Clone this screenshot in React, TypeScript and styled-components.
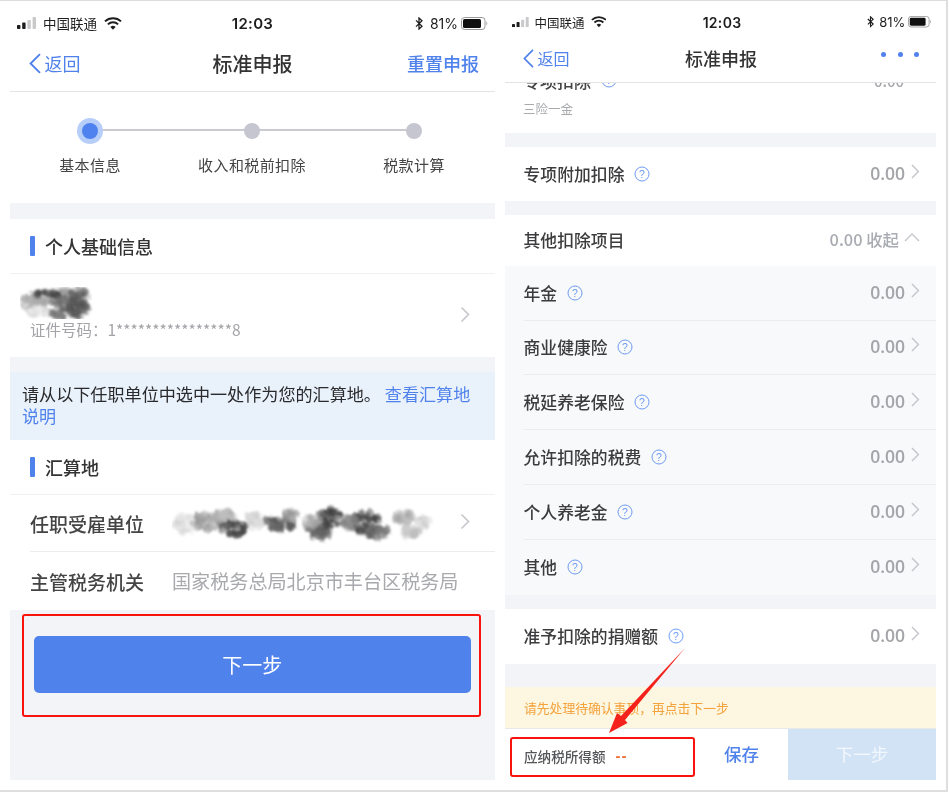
import React from "react";
import styled, { createGlobalStyle } from "styled-components";

const GlobalStyle = createGlobalStyle`
  html, body { margin: 0; padding: 0; background: #fff; }
  * { box-sizing: border-box; }
  body { font-family: "Noto Sans CJK SC", "Noto Sans", sans-serif; }
`;

const Page = styled.div`
  width: 948px;
  height: 792px;
  display: flex;
  gap: 10px;
  padding-left: 10px;
  background: #fff;
  border-top: 1px solid #dcdcdc;
  border-right: 2px solid #dedede;
  border-bottom: 2px solid #dedede;
  filter: blur(0.4px);
`;

const Phone = styled.div<{ $w: number }>`
  position: relative;
  width: ${({ $w }) => $w}px;
  height: 779px;
  display: flex;
  flex-direction: column;
`;

/* status bar */
const Status = styled.div<{ $small?: boolean }>`
  height: 44px;
  padding: ${({ $small }) => ($small ? "0 4px 2px 7px" : "0 7px 0 7px")};
  display: grid;
  grid-template-columns: 1fr auto 1fr;
  align-items: center;
  color: #1d1d1f;
  font-size: ${({ $small }) => ($small ? 12.5 : 13.5)}px;
`;
const StatusSide = styled.div<{ $right?: boolean; $gap: number }>`
  display: flex;
  align-items: center;
  gap: ${({ $gap }) => $gap}px;
  justify-content: ${({ $right }) => ($right ? "flex-end" : "flex-start")};
`;
const Clock = styled.span<{ $small?: boolean }>`
  font-family: "Inter", "Liberation Sans", sans-serif;
  font-weight: 600;
  font-size: ${({ $small }) => ($small ? 14 : 15)}px;
  letter-spacing: 0.3px;
`;
const Percent = styled.span<{ $small?: boolean }>`
  font-family: "Inter", "Liberation Sans", sans-serif;
  font-size: ${({ $small }) => ($small ? 13 : 14)}px;
`;

function StatusBar({ small }: { small?: boolean }) {
  const k = small ? 0.88 : 1;
  return (
    <Status $small={small}>
      <StatusSide $gap={small ? 5 : 6}>
        <svg width={20 * k} height={12 * k} viewBox="0 0 20 12">
          <rect x="0" y="8" width="3.4" height="4" rx="0.8" fill="#1d1d1f" />
          <rect x="5.2" y="5.6" width="3.4" height="6.4" rx="0.8" fill="#1d1d1f" />
          <rect x="10.4" y="3" width="3.4" height="9" rx="0.8" fill="#c9c9cc" />
          <rect x="15.6" y="0" width="3.4" height="12" rx="0.8" fill="#c9c9cc" />
        </svg>
        <span>中国联通</span>
        <svg width={18 * k} height={13 * k} viewBox="0 0 18 13" style={{ marginLeft: 1 }}>
          <path d="M1 4.4a11.6 11.6 0 0 1 16 0" fill="none" stroke="#1d1d1f" strokeWidth="2" />
          <path d="M3.9 7.4a7.4 7.4 0 0 1 10.2 0" fill="none" stroke="#1d1d1f" strokeWidth="2" />
          <path d="M6.4 10a3.7 3.7 0 0 1 5.2 0L9 12.8z" fill="#1d1d1f" />
        </svg>
      </StatusSide>
      <Clock $small={small}>12:03</Clock>
      <StatusSide $right $gap={small ? 5 : 7}>
        <svg width={8 * k} height={13 * k} viewBox="0 0 8 13">
          <path d="M1 3.4l6 5.8L4 12V1l3 2.8L1 9.6" fill="none" stroke="#1d1d1f" strokeWidth="1.3" />
        </svg>
        <Percent $small={small}>81%</Percent>
        <svg width={27 * k} height={13 * k} viewBox="0 0 27 13" style={{ marginLeft: small ? -2 : -4 }}>
          <rect x="0.5" y="0.5" width="23.5" height="12" rx="3" fill="none" stroke="#9a9a9a" />
          <rect x="2" y="2" width="18" height="9" rx="1.6" fill="#111" />
          <path d="M25.4 4.6c1 .3 1.2 3.5 0 3.8z" fill="#9a9a9a" />
        </svg>
      </StatusSide>
    </Status>
  );
}

/* nav bar */
const Nav = styled.div<{ $h: number; $l: number; $r: number; $b: number }>`
  height: ${({ $h }) => $h}px;
  padding: 0 ${({ $r }) => $r}px ${({ $b }) => $b}px ${({ $l }) => $l}px;
  display: grid;
  grid-template-columns: 1fr auto 1fr;
  align-items: center;
  border-bottom: 1px solid #e4e4e6;
  background: #fff;
`;
const Back = styled.div<{ $size: number; $shift?: number }>`
  display: flex;
  align-items: center;
  gap: 3px;
  margin-left: ${({ $shift }) => $shift ?? 0}px;
  color: #5082ec;
  font-size: ${({ $size }) => $size}px;
`;
const NavTitle = styled.div<{ $size: number }>`
  color: #333;
  font-size: ${({ $size }) => $size}px;
  font-weight: 500;
`;
const NavAction = styled.div`
  justify-self: end;
  color: #5082ec;
  font-size: 18px;
  font-weight: 500;
`;
const MoreDots = styled.div`
  justify-self: end;
  display: flex;
  gap: 11.5px;
  margin-bottom: 8px;
`;
const Dot = styled.span`
  width: 5px;
  height: 5px;
  border-radius: 50%;
  background: #5082ec;
`;

const BackArrow = ({ h }: { h: number }) => (
  <svg width={h * 0.6} height={h} viewBox="0 0 12 20">
    <path d="M10.5 1L1.5 10l9 9" fill="none" stroke="#5082ec" strokeWidth="1.8" />
  </svg>
);

/* stepper */
const Stepper = styled.div`
  height: 111px;
  width: 486px;
  margin-left: -1px;
  display: grid;
  grid-template-columns: repeat(3, 1fr);
`;
const Step = styled.div<{ $line?: "left" | "mid" | "right" }>`
  position: relative;
  display: flex;
  flex-direction: column;
  align-items: center;
  padding-top: 26px;
  &::before {
    content: "";
    position: absolute;
    top: 37px;
    height: 1.5px;
    background: #cacad2;
    left: ${({ $line }) => ($line === "left" ? "50%" : "0")};
    right: ${({ $line }) => ($line === "right" ? "50%" : "0")};
  }
`;
const Bullet = styled.div<{ $on?: boolean }>`
  position: relative;
  width: 26px;
  height: 26px;
  display: flex;
  align-items: center;
  justify-content: center;
  border-radius: 50%;
  background: ${({ $on }) => ($on ? "#b7cff8" : "transparent")};
  &::after {
    content: "";
    width: 16px;
    height: 16px;
    border-radius: 50%;
    background: ${({ $on }) => ($on ? "#4f82ee" : "#c6c6d0")};
  }
`;
const StepLabel = styled.div`
  margin-top: 10px;
  color: #444;
  font-size: 15px;
  line-height: 22px;
  letter-spacing: 0.4px;
`;

/* shared blocks */
const Gap = styled.div<{ $h: number }>`
  height: ${({ $h }) => $h}px;
  background: #f3f4f8;
`;
const SectionHead = styled.div`
  height: 55px;
  padding-left: 20px;
  display: flex;
  align-items: center;
  gap: 10px;
  color: #333;
  font-size: 18px;
  font-weight: 500;
  border-bottom: 1px solid #f0f0f2;
  &::before {
    content: "";
    width: 5px;
    height: 20px;
    border-radius: 1px;
    background: #5082ec;
  }
`;
const PersonRow = styled.div`
  height: 83px;
  padding: 13px 24px 0 10px;
  display: flex;
  justify-content: space-between;
`;
const PersonInfo = styled.div`
  display: flex;
  flex-direction: column;
`;
const PersonId = styled.div`
  margin: 0 0 0 10px;
  color: #a3a4a8;
  font-size: 15.5px;
  line-height: 20px;
`;
const Notice = styled.div`
  height: 68px;
  padding: 11px 20px 0 12px;
  background: #e9f1fb;
  color: #2a2a2c;
  font-size: 17.1px;
  line-height: 22px;
  a { color: #5082ec; }
`;
const FieldRow = styled.div<{ $h: number; $line?: boolean }>`
  height: ${({ $h }) => $h}px;
  margin-left: 20px;
  padding-right: 24px;
  display: flex;
  align-items: center;
  border-bottom: ${({ $line }) => ($line ? "1px solid #ececee" : "none")};
`;
const FieldName = styled.div`
  width: 142px;
  flex: none;
  color: #444;
  font-size: 19px;
  font-weight: 500;
`;
const FieldValue = styled.div`
  flex: 1;
  display: flex;
  color: #a8a9ad;
  font-size: 19.1px;
  white-space: nowrap;
`;
const Footer = styled.div`
  flex: 1;
  background: #f3f4f8;
  padding: 4px 14px 0 12px;
`;
const RedFrame = styled.div`
  height: 103px;
  padding: 20px 8.5px 0 10px;
  border: 2.5px solid #f8140c;
  border-radius: 3px;
`;
const PrimaryButton = styled.div`
  height: 57px;
  display: flex;
  align-items: center;
  justify-content: center;
  border-radius: 5px;
  background: #5082ec;
  color: #fff;
  font-size: 20px;
`;

/* right column rows */
const CutRow = styled.div`
  height: 50px;
  padding: 0 0 15px 18px;
  display: flex;
  flex-direction: column;
  justify-content: flex-end;
  overflow: hidden;
`;
const CutTop = styled.div`
  display: flex;
  align-items: center;
  height: 24px;
  margin-bottom: 8px;
  padding-right: 32px;
  color: #444;
  font-size: 17px;
  font-weight: 500;
`;
const CutValue = styled.span`
  margin-left: auto;
  color: #a4a5a8;
  font-size: 15px;
`;
const CutSub = styled.div`
  color: #a9aaae;
  font-size: 12.5px;
  line-height: 18px;
`;
const Row = styled.div<{ $h: number; $soft?: boolean }>`
  height: ${({ $h }) => $h}px;
  padding-left: 18.5px;
  background: ${({ $soft }) => ($soft ? "#f8f9fb" : "#fff")};
`;
const RowInner = styled.div<{ $line?: boolean }>`
  height: 100%;
  padding: 0 16px 1px 0;
  display: flex;
  align-items: center;
  border-bottom: ${({ $line }) => ($line ? "1px solid #ececef" : "none")};
`;
const RowName = styled.div`
  color: #3c3c3e;
  font-size: 16.8px;
  font-weight: 500;
  letter-spacing: 0.05px;
`;
const Amount = styled.div`
  margin: 0 0 2px auto;
  display: flex;
  align-items: center;
  gap: 6px;
  color: #a4a5a8;
  font-family: "Open Sans", "Liberation Sans", sans-serif;
  font-size: 17.5px;
  font-weight: 600;
`;
const Fold = styled.div`
  margin: 0 0 2px auto;
  display: flex;
  align-items: center;
  gap: 5px;
  color: #a9abb2;
  font-size: 16.4px;
  font-weight: 500;
`;
const Warn = styled.div`
  height: 41px;
  padding-left: 19px;
  display: flex;
  align-items: center;
  background: #fdf6e0;
  color: #f4a23c;
  font-size: 12.8px;
`;
const BottomBar = styled.div`
  flex: 1;
  display: flex;
  border-top: 1px solid #e9e9ec;
`;
const TotalBox = styled.div`
  width: 185px;
  height: 40px;
  margin: 8px 0 0 5px;
  padding: 0 0 3px 12px;
  display: flex;
  align-items: center;
  gap: 10px;
  border: 2.5px solid #f8140c;
  border-radius: 3px;
  color: #55565a;
  font-size: 13.6px;
  font-weight: 500;
`;
const Dash = styled.span`
  color: #ee6a2e;
  font-family: "Liberation Sans", sans-serif;
  font-size: 15px;
  font-weight: 700;
  letter-spacing: 1px;
`;
const Save = styled.div`
  flex: 1;
  padding-bottom: 3px;
  display: flex;
  align-items: center;
  justify-content: center;
  color: #5082ec;
  font-size: 17.5px;
  font-weight: 500;
`;
const NextOff = styled.div`
  width: 148px;
  padding-bottom: 3px;
  display: flex;
  align-items: center;
  justify-content: center;
  background: #d3e3f6;
  color: #f2f7fd;
  font-size: 17.5px;
`;
const ArrowMark = styled.svg`
  position: absolute;
  left: 95px;
  top: 640px;
`;

const Chevron = () => (
  <svg width="9" height="15" viewBox="0 0 9 15" style={{ marginBottom: 3 }}>
    <path d="M1 1l6.4 6.5L1 14" fill="none" stroke="#c6c7cc" strokeWidth="1.5" />
  </svg>
);

const Help = () => (
  <svg width="16" height="16" viewBox="0 0 16 16" style={{ marginLeft: 9.5, flex: "none" }}>
    <circle cx="8" cy="8" r="7" fill="none" stroke="#6f9bf3" strokeWidth="1" />
    <text x="8" y="11.6" textAnchor="middle" fontSize="10.5" fill="#6f9bf3" fontFamily="Liberation Sans, sans-serif">?</text>
  </svg>
);

/* the smeared-out private details: each cluster scatters small ink spots */
const Smudge = ({ width, height, blobs, seed }: { width: number; height: number; blobs: number[][]; seed: number }) => {
  const id = `ink${width}`;
  let s = seed;
  const rnd = () => {
    s = (s * 16807) % 2147483647;
    return (s % 1000) / 1000;
  };
  const spots: number[][] = [];
  blobs.forEach(([cx, cy, rx, ry, g]) => {
    const n = Math.round((rx * ry) / 3) + 10;
    for (let i = 0; i < n; i++) {
      const a = rnd() * Math.PI * 2;
      const d = Math.sqrt(rnd());
      spots.push([cx + Math.cos(a) * d * rx, cy + Math.sin(a) * d * ry, 1.6 + rnd() * 2.8, g + (rnd() - 0.5) * 40]);
    }
  });
  return (
    <svg width={width} height={height} viewBox={`0 0 ${width} ${height}`}>
      <filter id={id} x="-10%" y="-20%" width="120%" height="140%">
        <feTurbulence type="fractalNoise" baseFrequency="0.3" numOctaves="2" seed="4" />
        <feDisplacementMap in="SourceGraphic" scale="4" />
        <feGaussianBlur stdDeviation="0.8" />
      </filter>
      <g filter={`url(#${id})`}>
        {spots.map(([x, y, r, g], i) => (
          <circle key={i} cx={x} cy={y} r={r} fill={`rgb(${g},${g},${g})`} opacity="0.5" />
        ))}
      </g>
    </svg>
  );
};

const nameBlobs = [
  [14, 18, 12, 8, 190], [36, 10, 32, 7, 170], [48, 21, 20, 11, 110], [58, 19, 10, 9, 90],
  [28, 7, 12, 2, 70], [58, 6, 8, 3, 100], [20, 25, 12, 4, 225],
];
const unitBlobs = [
  [14, 22, 12, 9, 225], [36, 20, 15, 8, 165], [62, 25, 13, 8, 70], [52, 14, 10, 5, 180],
  [84, 18, 10, 8, 215], [108, 21, 15, 7, 90], [118, 13, 7, 5, 160], [146, 29, 13, 8, 100],
  [158, 16, 13, 9, 70], [140, 20, 9, 5, 170], [192, 20, 14, 11, 75], [206, 30, 11, 6, 110],
  [178, 22, 8, 7, 140], [232, 16, 10, 6, 175], [238, 29, 11, 5, 195], [250, 20, 7, 5, 210],
];

const steps: [string, "left" | "mid" | "right"][] = [
  ["基本信息", "left"],
  ["收入和税前扣除", "mid"],
  ["税款计算", "right"],
];

const otherItems: [string, number][] = [
  ["年金", 55],
  ["商业健康险", 54],
  ["税延养老保险", 55],
  ["允许扣除的税费", 55],
  ["个人养老金", 55],
  ["其他", 55],
];

export default function App() {
  return (
    <Page>
      <GlobalStyle />
      <Phone $w={485}>
        <StatusBar />
        <Nav $h={47} $l={16} $r={16} $b={10}>
          <Back $size={18} $shift={3}><BackArrow h={21} />返回</Back>
          <NavTitle $size={20}>标准申报</NavTitle>
          <NavAction>重置申报</NavAction>
        </Nav>
        <Stepper>
          {steps.map(([label, line], i) => (
            <Step key={label} $line={line}>
              <Bullet $on={i === 0} />
              <StepLabel>{label}</StepLabel>
            </Step>
          ))}
        </Stepper>
        <Gap $h={16} />
        <SectionHead>个人基础信息</SectionHead>
        <PersonRow>
          <PersonInfo>
            <Smudge width={80} height={32} blobs={nameBlobs} seed={71} />
            <PersonId>证件号码：1****************8</PersonId>
          </PersonInfo>
          <svg width="11" height="17" viewBox="0 0 11 17" style={{ marginTop: 19 }}>
            <path d="M1.5 1.5l7 7-7 7" fill="none" stroke="#c6c7cc" strokeWidth="1.6" />
          </svg>
        </PersonRow>
        <Gap $h={15} />
        <Notice>
          请从以下任职单位中选中一处作为您的汇算地。 <a>查看汇算地说明</a>
        </Notice>
        <SectionHead>汇算地</SectionHead>
        <FieldRow $h={57} $line>
          <FieldName>任职受雇单位</FieldName>
          <FieldValue>
            <Smudge width={262} height={42} blobs={unitBlobs} seed={137} />
          </FieldValue>
          <svg width="11" height="17" viewBox="0 0 11 17" style={{ marginBottom: 3 }}>
            <path d="M1.5 1.5l7 7-7 7" fill="none" stroke="#c6c7cc" strokeWidth="1.6" />
          </svg>
        </FieldRow>
        <FieldRow $h={58}>
          <FieldName>主管税务机关</FieldName>
          <FieldValue>国家税务总局北京市丰台区税务局</FieldValue>
        </FieldRow>
        <Footer>
          <RedFrame>
            <PrimaryButton>下一步</PrimaryButton>
          </RedFrame>
        </Footer>
      </Phone>

      <Phone $w={431}>
        <StatusBar small />
        <Nav $h={38} $l={18} $r={17} $b={12}>
          <Back $size={16}><BackArrow h={19} />返回</Back>
          <NavTitle $size={18}>标准申报</NavTitle>
          <MoreDots><Dot /><Dot /><Dot /></MoreDots>
        </Nav>
        <CutRow>
          <CutTop>
            <span>专项扣除</span>
            <Help />
            <CutValue>0.00</CutValue>
          </CutTop>
          <CutSub>三险一金</CutSub>
        </CutRow>
        <Gap $h={14} />
        <Row $h={54}>
          <RowInner>
            <RowName>专项附加扣除</RowName>
            <Help />
            <Amount>0.00<Chevron /></Amount>
          </RowInner>
        </Row>
        <Gap $h={14} />
        <Row $h={51}>
          <RowInner>
            <RowName>其他扣除项目</RowName>
            <Fold>
              0.00 收起
              <svg width="16" height="9" viewBox="0 0 16 9" style={{ marginBottom: 3 }}>
                <path d="M1 8l7-7 7 7" fill="none" stroke="#c6c7cc" strokeWidth="1.4" />
              </svg>
            </Fold>
          </RowInner>
        </Row>
        {otherItems.map(([name, h], i) => (
          <Row key={name} $h={h} $soft>
            <RowInner $line={i < otherItems.length - 1}>
              <RowName>{name}</RowName>
              <Help />
              <Amount>0.00<Chevron /></Amount>
            </RowInner>
          </Row>
        ))}
        <Gap $h={14} />
        <Row $h={55}>
          <RowInner>
            <RowName>准予扣除的捐赠额</RowName>
            <Help />
            <Amount>0.00<Chevron /></Amount>
          </RowInner>
        </Row>
        <Gap $h={23} />
        <Warn>请先处理待确认事项，再点击下一步</Warn>
        <BottomBar>
          <TotalBox>
            应纳税所得额
            <Dash>--</Dash>
          </TotalBox>
          <Save>保存</Save>
          <NextOff>下一步</NextOff>
        </BottomBar>
        <ArrowMark width="95" height="100" viewBox="0 0 95 100">
          <path d="M85 7L25 79l2.5 3L9 92l8-20 4 3z" fill="#f5221b" />
        </ArrowMark>
      </Phone>
    </Page>
  );
}
